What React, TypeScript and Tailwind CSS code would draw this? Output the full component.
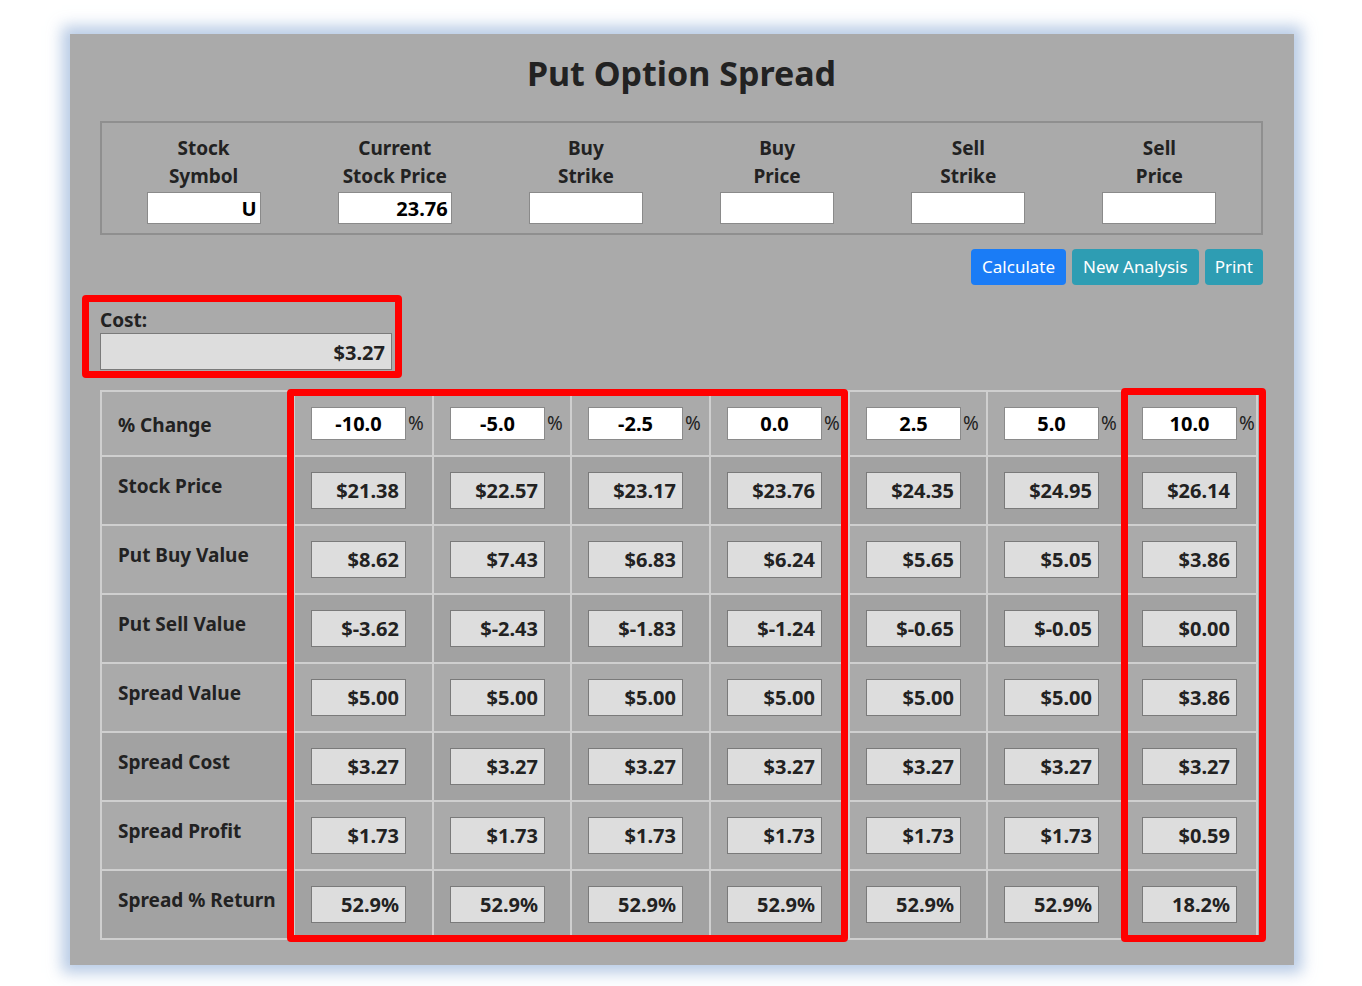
const inputCols = [
  { top: "Stock", bottom: "Symbol", value: "U" },
  { top: "Current", bottom: "Stock Price", value: "23.76" },
  { top: "Buy", bottom: "Strike", value: "" },
  { top: "Buy", bottom: "Price", value: "" },
  { top: "Sell", bottom: "Strike", value: "" },
  { top: "Sell", bottom: "Price", value: "" },
];

const changes = ["-10.0", "-5.0", "-2.5", "0.0", "2.5", "5.0", "10.0"];

const rows: { label: string; values: string[] }[] = [
  { label: "Stock Price", values: ["$21.38", "$22.57", "$23.17", "$23.76", "$24.35", "$24.95", "$26.14"] },
  { label: "Put Buy Value", values: ["$8.62", "$7.43", "$6.83", "$6.24", "$5.65", "$5.05", "$3.86"] },
  { label: "Put Sell Value", values: ["$-3.62", "$-2.43", "$-1.83", "$-1.24", "$-0.65", "$-0.05", "$0.00"] },
  { label: "Spread Value", values: ["$5.00", "$5.00", "$5.00", "$5.00", "$5.00", "$5.00", "$3.86"] },
  { label: "Spread Cost", values: ["$3.27", "$3.27", "$3.27", "$3.27", "$3.27", "$3.27", "$3.27"] },
  { label: "Spread Profit", values: ["$1.73", "$1.73", "$1.73", "$1.73", "$1.73", "$1.73", "$0.59"] },
  { label: "Spread % Return", values: ["52.9%", "52.9%", "52.9%", "52.9%", "52.9%", "52.9%", "18.2%"] },
];

function OutBox({ value }: { value: string }) {
  return (
    <div className="h-[37px] w-[95px] border border-[#7a7a7a] bg-[#dddddd] pr-[6px] text-right text-[20px] font-bold leading-[35px] text-[#222]">
      {value}
    </div>
  );
}

export default function App() {
  return (
    <div className="min-h-screen bg-white pl-[70px] pt-[34px]" style={{ fontFamily: '"Noto Sans", "Open Sans", sans-serif' }}>
      <div className="relative h-[931px] w-[1224px] bg-[#aaaaaa] pl-[30px] pr-[31px] shadow-[0_0_14px_8px_rgba(160,185,220,0.75)]">
        <h1 className="h-[87px] pt-[19px] text-center text-[34px] font-bold leading-[40px] text-[#222]">
          Put Option Spread
        </h1>

        <div className="grid h-[114px] grid-cols-6 border-2 border-[#8f8f8f] px-[6px] pt-[11px]">
          {inputCols.map((c, i) => (
            <div key={i} className="flex flex-col items-center">
              <div className="text-center text-[19px] font-bold leading-[28px] text-[#222]">
                {c.top}
                <br />
                {c.bottom}
              </div>
              <input
                readOnly
                value={c.value}
                className="mt-[2px] h-[32px] w-[114px] border border-[#8a8a8a] bg-white px-[3px] text-right text-[20px] font-bold text-black outline-none"
              />
            </div>
          ))}
        </div>

        <div className="mt-[14px] flex justify-end gap-[6px]">
          <button className="h-[36px] rounded-[4px] bg-[#1a7cf6] px-[11px] text-[17px] text-white">Calculate</button>
          <button className="h-[36px] rounded-[4px] bg-[#2e9db3] px-[11px] text-[17px] text-white">New Analysis</button>
          <button className="h-[36px] rounded-[4px] bg-[#2e9db3] px-[10px] text-[17px] text-white">Print</button>
        </div>

        <div className="mt-[22px] text-[19px] font-bold leading-[26px] text-[#222]">Cost:</div>
        <div className="h-[37px] w-[292px] border border-[#7a7a7a] bg-[#dddddd] pr-[6px] text-right text-[20px] font-bold leading-[37px] text-[#222]">
          $3.27
        </div>

        <table className="mt-[20px] w-[1158px] table-fixed border-collapse border-2 border-[#cfcfcf]">
          <colgroup>
            <col className="w-[193px]" />
            <col className="w-[139px]" />
            <col className="w-[138px]" />
            <col className="w-[139px]" />
            <col className="w-[139px]" />
            <col className="w-[138px]" />
            <col className="w-[138px]" />
            <col />
          </colgroup>
          <tbody>
            <tr className="h-[65px] bg-[#aaaaaa]">
              <th className="border-2 border-[#cfcfcf] pl-[16px] pt-[4px] text-left text-[19px] font-bold text-[#222]">
                % Change
              </th>
              {changes.map((c) => (
                <td key={c} className="border-2 border-[#cfcfcf] pl-[16px]">
                  <div className="flex items-center">
                    <input
                      readOnly
                      value={c}
                      className="h-[33px] w-[95px] border border-[#8a8a8a] bg-white text-center text-[20px] font-bold text-black outline-none"
                    />
                    <span className="pl-[2px] text-[19px] text-[#222]">%</span>
                  </div>
                </td>
              ))}
            </tr>
            {rows.map((r, i) => (
              <tr key={r.label} className={i % 2 === 0 ? "h-[69px] bg-[#a2a2a2]" : "h-[69px] bg-[#aaaaaa]"}>
                <th className="border-2 border-[#cfcfcf] pb-[8px] pl-[16px] text-left text-[19px] font-bold text-[#222]">
                  {r.label}
                </th>
                {r.values.map((v, j) => (
                  <td key={j} className="border-2 border-[#cfcfcf] pl-[16px]">
                    <OutBox value={v} />
                  </td>
                ))}
              </tr>
            ))}
          </tbody>
        </table>

        {/* red highlight boxes */}
        <div className="absolute left-[12px] top-[261px] h-[83px] w-[320px] rounded-[4px] border-[7px] border-[#ff0000]" />
        <div className="absolute left-[217px] top-[355px] h-[553px] w-[561px] rounded-[4px] border-[7px] border-[#ff0000]" />
        <div className="absolute left-[1051px] top-[354px] h-[554px] w-[145px] rounded-[4px] border-[7px] border-[#ff0000]" />
      </div>
    </div>
  );
}
